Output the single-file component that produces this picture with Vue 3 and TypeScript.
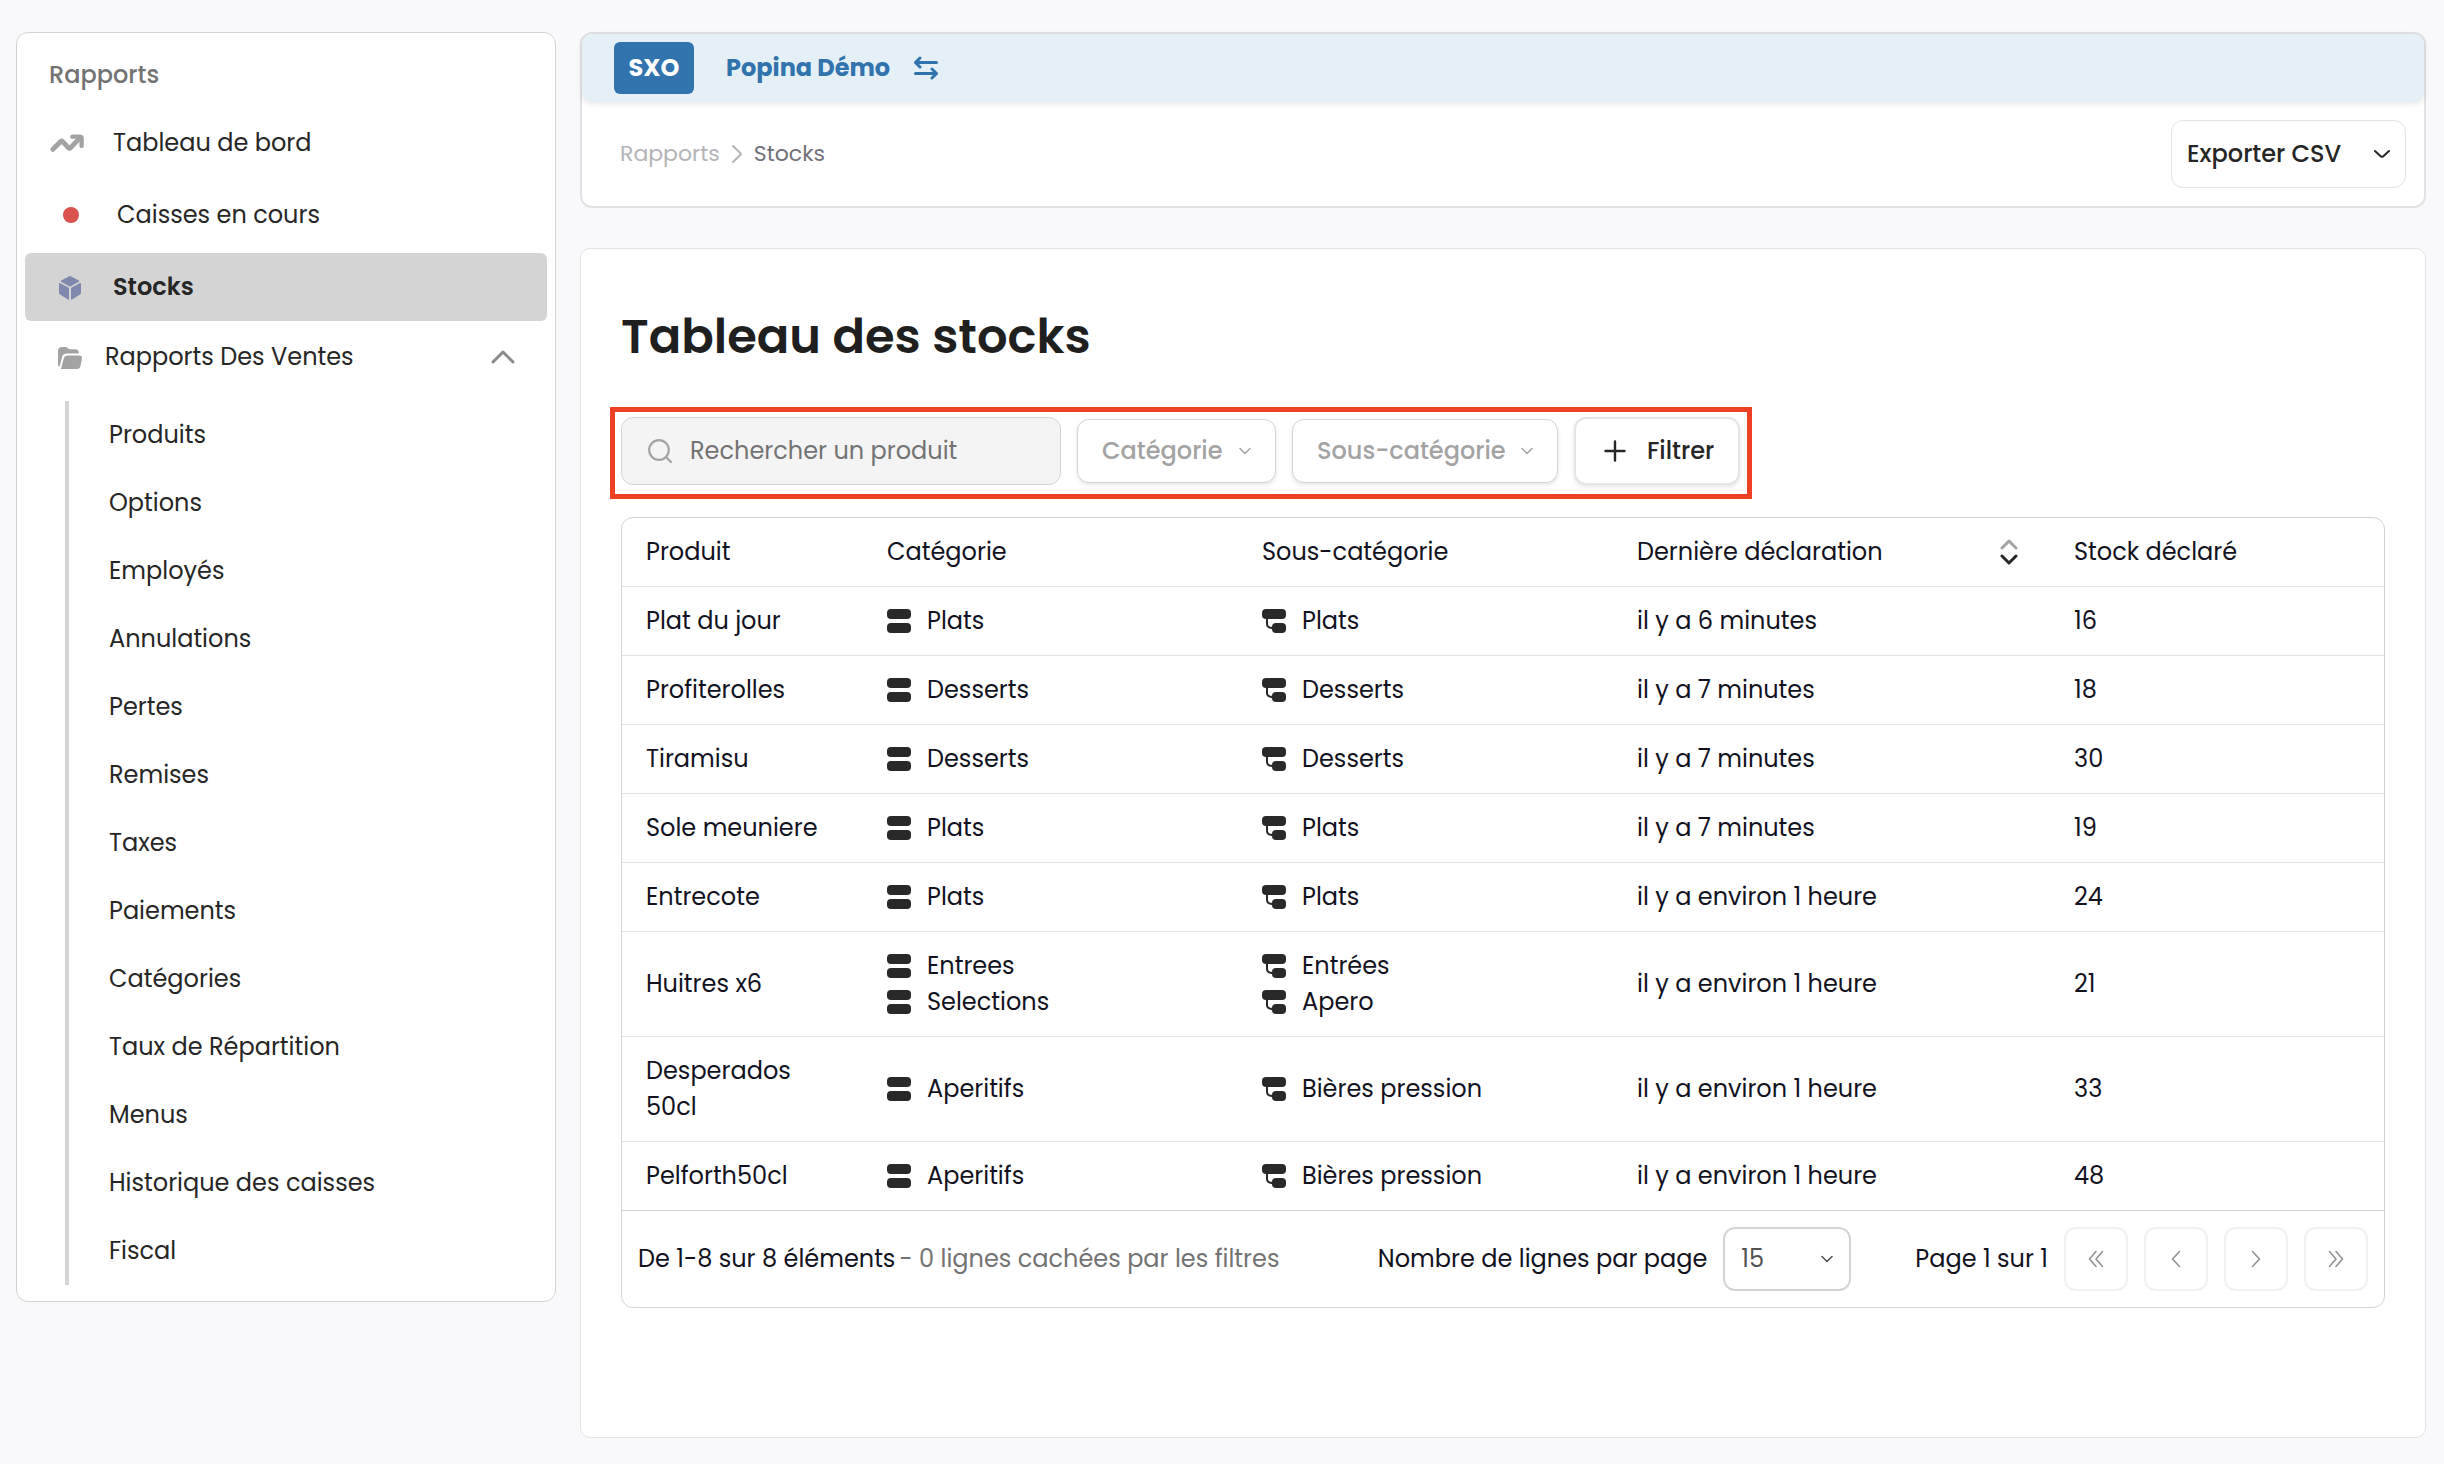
<script setup lang="ts">
import { ref } from 'vue'

interface StockRow {
  product: string
  categories: string[]
  subcategories: string[]
  declared: string
  stock: number
}

const reports: string[] = [
  'Produits', 'Options', 'Employés', 'Annulations', 'Pertes', 'Remises', 'Taxes',
  'Paiements', 'Catégories', 'Taux de Répartition', 'Menus', 'Historique des caisses', 'Fiscal',
]

const rows: StockRow[] = [
  { product: 'Plat du jour', categories: ['Plats'], subcategories: ['Plats'], declared: 'il y a 6 minutes', stock: 16 },
  { product: 'Profiterolles', categories: ['Desserts'], subcategories: ['Desserts'], declared: 'il y a 7 minutes', stock: 18 },
  { product: 'Tiramisu', categories: ['Desserts'], subcategories: ['Desserts'], declared: 'il y a 7 minutes', stock: 30 },
  { product: 'Sole meuniere', categories: ['Plats'], subcategories: ['Plats'], declared: 'il y a 7 minutes', stock: 19 },
  { product: 'Entrecote', categories: ['Plats'], subcategories: ['Plats'], declared: 'il y a environ 1 heure', stock: 24 },
  { product: 'Huitres x6', categories: ['Entrees', 'Selections'], subcategories: ['Entrées', 'Apero'], declared: 'il y a environ 1 heure', stock: 21 },
  { product: 'Desperados\n50cl', categories: ['Aperitifs'], subcategories: ['Bières pression'], declared: 'il y a environ 1 heure', stock: 33 },
  { product: 'Pelforth50cl', categories: ['Aperitifs'], subcategories: ['Bières pression'], declared: 'il y a environ 1 heure', stock: 48 },
]

const search = ref('')
const pageSize = ref('15')
</script>

<template>
  <div class="page">
    <nav class="sidebar" aria-label="Rapports">
      <h2 class="side-title">Rapports</h2>
      <a class="side-link" href="#">
        <svg class="icon-trend" viewBox="0 0 36 20" fill="none" stroke="#a3a3a3" stroke-width="5" stroke-linecap="round" stroke-linejoin="round">
          <path d="M3 16.500L11 8.500Q12 7.500 13 8.500L19 15Q20 16 21 15L31 4.500" />
          <path d="M23 3.500H30.500Q32.500 3.500 32.500 5.500V13" stroke-width="4.500" />
        </svg>
        <span>Tableau de bord</span>
      </a>
      <a class="side-link live" href="#">
        <span class="dot"></span>
        <span>Caisses en cours</span>
      </a>
      <a class="side-link active" href="#">
        <svg class="icon-box" viewBox="0 0 22 24" fill="#8188ad">
          <path d="M9.800.4Q11 -.2 12.200.4L19.800 4.600Q20.500 5.200 19.800 5.800L11.800 10.200Q11 10.600 10.200 10.200L2.200 5.800Q1.500 5.200 2.200 4.600Z" />
          <path d="M.9 7Q0 6.800 0 7.800V16.500Q0 17.800 1 18.500L9 23.500Q10 24 10 23V13Q10 12 9.200 11.600Z" />
          <path d="M21.100 7Q22 6.800 22 7.800V16.500Q22 17.800 21 18.500L13 23.500Q12 24 12 23V13Q12 12 12.800 11.600Z" />
        </svg>
        <span>Stocks</span>
      </a>
      <button class="side-group" type="button" aria-expanded="true">
        <svg class="icon-folder" viewBox="0 0 24 22" fill="#a3a3a3">
          <path d="M0 17.500V4Q0 0 4 0H7.500Q8.500 0 9.500.8L10.800 1.900Q11.300 2.300 12 2.300H17Q20.800 2.300 21 6.500H9.500Q5 6.500 4.200 9.500L1.600 19.800Q0 19 0 17.500Z" />
          <path d="M5.800 11.500Q6.500 8.400 9.500 8.400H21Q24.500 8.400 23.900 11.800L22.600 18.500Q22 22 18.500 22H2.800Z" />
        </svg>
        <span>Rapports Des Ventes</span>
        <svg class="icon-up" viewBox="0 0 24 14" fill="none" stroke="#8a8a8a" stroke-width="3" stroke-linecap="round" stroke-linejoin="round"><path d="M2 12L12 2L22 12" /></svg>
      </button>
      <ul class="sublist">
        <li v-for="item in reports" :key="item"><a href="#">{{ item }}</a></li>
      </ul>
    </nav>

    <main class="main">
      <header class="topbar">
        <div class="account">
          <span class="badge">SXO</span>
          <button class="shop" type="button">
            <span>Popina Démo</span>
            <svg class="icon-swap" viewBox="0 0 24 24" fill="none" stroke="#3173ad" stroke-width="3" stroke-linecap="round" stroke-linejoin="round">
              <path d="M6 2L1.500 6.500L6 11M1.500 6.500H22.500M18 13L22.500 17.500L18 22M22.500 17.500H1.500" />
            </svg>
          </button>
        </div>
        <div class="toolbar">
          <nav class="crumbs" aria-label="Fil d'Ariane">
            <a href="#">Rapports</a>
            <svg class="icon-crumb" viewBox="0 0 10 20" fill="none" stroke="#b4b4b8" stroke-width="2" stroke-linecap="round" stroke-linejoin="round"><path d="M1 2L8.500 9.200Q9.200 10 8.500 10.800L1 18" /></svg>
            <span class="current">Stocks</span>
          </nav>
          <button class="export" type="button">
            <span>Exporter CSV</span>
            <svg class="icon-down" viewBox="0 0 16 10" fill="none" stroke="#262626" stroke-width="2" stroke-linecap="round" stroke-linejoin="round"><path d="M1 2L7 7.500Q8 8.200 9 7.500L15 2" /></svg>
          </button>
        </div>
      </header>

      <section class="card">
        <h1>Tableau des stocks</h1>
        <div class="filters">
          <label class="search">
            <svg class="icon-search" viewBox="0 0 24 24" fill="none" stroke="#a3a3a3" stroke-width="2.200" stroke-linecap="round"><circle cx="11" cy="11" r="9.800" /><path d="M18.200 18.200L23 23" /></svg>
            <input v-model="search" type="text" placeholder="Rechercher un produit" aria-label="Rechercher un produit" />
          </label>
          <button class="facet category" type="button">
            <span>Catégorie</span>
            <svg class="icon-small" viewBox="0 0 12 8" fill="none" stroke="#a3a3a3" stroke-width="1.500" stroke-linecap="round" stroke-linejoin="round"><path d="M1 1.500L6 6.500L11 1.500" /></svg>
          </button>
          <button class="facet subcategory" type="button">
            <span>Sous-catégorie</span>
            <svg class="icon-small" viewBox="0 0 12 8" fill="none" stroke="#a3a3a3" stroke-width="1.500" stroke-linecap="round" stroke-linejoin="round"><path d="M1 1.500L6 6.500L11 1.500" /></svg>
          </button>
          <button class="apply" type="button">
            <svg class="icon-plus" viewBox="0 0 22 22" fill="none" stroke="#262626" stroke-width="2.400" stroke-linecap="round"><path d="M11 1.500V20.500M1.500 11H20.500" /></svg>
            <span>Filtrer</span>
          </button>
        </div>

        <div class="table-box">
          <table>
            <colgroup>
              <col class="c-product" /><col class="c-cat" /><col class="c-cat" /><col class="c-date" /><col />
            </colgroup>
            <thead>
              <tr>
                <th scope="col">Produit</th>
                <th scope="col">Catégorie</th>
                <th scope="col">Sous-catégorie</th>
                <th scope="col" aria-sort="descending">
                  <button class="sort" type="button">
                    <span>Dernière déclaration</span>
                    <svg class="icon-sort" viewBox="0 0 18 26" fill="none" stroke-width="3" stroke-linecap="round" stroke-linejoin="round">
                      <path d="M2 9L9 2L16 9" stroke="#a3a3a3" />
                      <path d="M2 17L9 24L16 17" stroke="#262626" />
                    </svg>
                  </button>
                </th>
                <th scope="col">Stock déclaré</th>
              </tr>
            </thead>
            <tbody>
              <tr v-for="row in rows" :key="row.product">
                <td class="product">{{ row.product }}</td>
                <td>
                  <div v-for="name in row.categories" :key="name" class="tag">
                    <svg class="icon-tag" viewBox="0 0 24 24" fill="#292929"><rect width="24" height="10" rx="4" /><rect y="14" width="24" height="10" rx="4" /></svg>
                    <span>{{ name }}</span>
                  </div>
                </td>
                <td>
                  <div v-for="name in row.subcategories" :key="name" class="tag">
                    <svg class="icon-tag" viewBox="0 0 24 24" fill="#292929">
                      <rect width="24" height="10" rx="4" />
                      <rect x="10" y="14" width="14" height="10" rx="4" />
                      <path d="M5 9V15Q5 19 11 19" fill="none" stroke="#292929" stroke-width="2" />
                    </svg>
                    <span>{{ name }}</span>
                  </div>
                </td>
                <td>{{ row.declared }}</td>
                <td>{{ row.stock }}</td>
              </tr>
            </tbody>
          </table>
          <footer class="pager">
            <p class="summary"><span>De 1-8 sur 8 éléments</span><span class="hidden-rows">- 0 lignes cachées par les filtres</span></p>
            <div class="pager-right">
              <label for="page-size">Nombre de lignes par page</label>
              <div class="select-wrap">
                <select id="page-size" v-model="pageSize">
                  <option>15</option>
                  <option>30</option>
                  <option>50</option>
                </select>
                <svg class="icon-small select-arrow" viewBox="0 0 12 8" fill="none" stroke="#525252" stroke-width="1.600" stroke-linecap="round" stroke-linejoin="round"><path d="M1 1.500L6 6.500L11 1.500" /></svg>
              </div>
              <span class="page-count">Page 1 sur 1</span>
              <div class="steps">
                <button type="button" disabled aria-label="Première page">
                  <svg class="icon-step" viewBox="0 0 16 18"><path d="M8 1.500L1.500 9L8 16.500M14.500 1.500L8 9L14.500 16.500" /></svg>
                </button>
                <button type="button" disabled aria-label="Page précédente">
                  <svg class="icon-step" viewBox="0 0 16 18"><path d="M11.500 1.500L4.500 9L11.500 16.500" /></svg>
                </button>
                <button type="button" disabled aria-label="Page suivante">
                  <svg class="icon-step" viewBox="0 0 16 18"><path d="M4.500 1.500L11.500 9L4.500 16.500" /></svg>
                </button>
                <button type="button" disabled aria-label="Dernière page">
                  <svg class="icon-step" viewBox="0 0 16 18"><path d="M8 1.500L14.500 9L8 16.500M1.500 1.500L8 9L1.500 16.500" /></svg>
                </button>
              </div>
            </div>
          </footer>
        </div>
      </section>
    </main>
  </div>
</template>

<style>
body {
  margin: 0;
  background: #f9f9fb;
}
</style>

<style scoped>
.page,
.page * {
  box-sizing: border-box;
}
.page {
  display: flex;
  align-items: flex-start;
  gap: 24px;
  min-height: 100vh;
  padding: 32px 18px 26px 16px;
  background: #f9f9fb;
  color: #262626;
  font-family: Poppins, Inter, "Open Sans", sans-serif;
  font-size: 24px;
  line-height: 36px;
}
svg {
  display: block;
  flex: none;
}
a {
  color: inherit;
  text-decoration: none;
}
button,
input,
select {
  font: inherit;
  color: inherit;
  margin: 0;
}
button {
  border: 0;
  padding: 0;
  background: none;
  text-align: left;
  white-space: nowrap;
}

/* Sidebar */
.sidebar {
  flex: 0 0 540px;
  padding: 0 8px 16px;
  background: #fff;
  border: 1px solid #d4d4d4;
  border-radius: 12px;
}
.side-title {
  margin: 24px 0 16px 24px;
  color: #737373;
  font-size: 24px;
  font-weight: 500;
  line-height: 36px;
}
.side-link,
.side-group {
  display: flex;
  align-items: center;
  width: 100%;
  height: 68px;
  margin-bottom: 4px;
  padding: 0 32px 0 25px;
  border-radius: 6px;
}
.side-link span:last-child {
  font-weight: 400;
}
.icon-trend {
  width: 35px;
  height: 20px;
  margin-right: 28px;
}
.dot {
  width: 16px;
  height: 16px;
  margin: 0 38px 0 13px;
  border-radius: 50%;
  background: #dc524e;
}
.side-link.active {
  margin-bottom: 2px;
  background: #d4d4d4;
}
.side-link.active span:last-child {
  font-weight: 600;
}
.icon-box {
  width: 22px;
  height: 24px;
  margin: 2px 32px 0 9px;
}
.side-group {
  margin-bottom: 10px;
}
.icon-folder {
  width: 24px;
  height: 22px;
  margin: 2px 23px 0 8px;
}
.icon-up {
  width: 24px;
  height: 14px;
  margin-left: auto;
}
.sublist {
  margin: 0 0 0 40px;
  padding: 0;
  border-left: 4px solid #d4d4d4;
  list-style: none;
}
.sublist a {
  display: block;
  padding: 16px 40px;
}

/* Top bar */
.main {
  display: flex;
  flex: 1;
  flex-direction: column;
  align-self: stretch;
  gap: 40px;
  min-width: 0;
}
.topbar {
  background: #fff;
  border: 2px solid #e2e2e4;
  border-radius: 12px;
}
.account {
  display: flex;
  align-items: center;
  gap: 32px;
  height: 68px;
  padding: 0 32px;
  border-radius: 10px;
  background: #e5f0f6;
  box-shadow: 0 2px 6px rgba(0, 0, 0, 0.1);
}
.badge {
  width: 80px;
  padding: 8px 0;
  border-radius: 6px;
  background: #3173ad;
  color: #fff;
  font-weight: 700;
  text-align: center;
}
.shop {
  display: flex;
  align-items: center;
  gap: 24px;
  color: #3173ad;
  font-weight: 700;
}
.icon-swap {
  width: 24px;
  height: 24px;
}
.toolbar {
  display: flex;
  align-items: center;
  justify-content: space-between;
  padding: 18px 18px 18px 38px;
}
.crumbs {
  display: flex;
  align-items: center;
  gap: 12px;
  color: #b4b4b8;
  font-size: 22px;
}
.current {
  color: #71717a;
}
.icon-crumb {
  width: 10px;
  height: 20px;
}
.export {
  display: flex;
  align-items: center;
  justify-content: space-between;
  width: 235px;
  height: 68px;
  padding: 0 15px;
  border: 1px solid #e2e2e4;
  border-radius: 12px;
  font-weight: 500;
}
.icon-down {
  width: 16px;
  height: 10px;
}

/* Card */
.card {
  flex: 1;
  padding: 52px 40px 40px;
  background: #fff;
  border: 1px solid #e2e2e4;
  border-radius: 10px;
}
h1 {
  margin: 0 0 34px;
  color: #1f1f1f;
  font-size: 48px;
  font-weight: 600;
  line-height: 72px;
}
.filters {
  display: flex;
  align-items: center;
  gap: 16px;
  width: fit-content;
  margin: 0 0 18px -11px;
  padding: 5px 7px 9px 6px;
  border: 5px solid #ed4024;
}
.search {
  display: flex;
  align-items: center;
  gap: 18px;
  width: 440px;
  height: 68px;
  padding: 0 26px;
  border: 1px solid #d4d4d4;
  border-radius: 12px;
  background: #f4f4f4;
}
.search input {
  flex: 1;
  min-width: 0;
  padding: 0;
  border: 0;
  outline: 0;
  background: none;
}
.search input::placeholder {
  color: #737373;
  opacity: 1;
}
.icon-search {
  width: 24px;
  height: 24px;
}
.facet {
  display: flex;
  align-items: center;
  justify-content: space-between;
  height: 64px;
  padding: 0 24px;
  border: 1px solid #d4d4d4;
  border-radius: 12px;
  background: #fff;
  box-shadow: 0 2px 4px rgba(0, 0, 0, 0.1);
  color: #a3a3a3;
  font-weight: 500;
}
.category {
  width: 199px;
}
.subcategory {
  width: 266px;
}
.icon-small {
  width: 12px;
  height: 8px;
}
.apply {
  display: flex;
  align-items: center;
  gap: 21px;
  width: 166px;
  height: 68px;
  padding-left: 28px;
  border: 2px solid #e5e5e5;
  border-radius: 12px;
  background: #fff;
  box-shadow: 0 2px 4px rgba(0, 0, 0, 0.1);
  font-weight: 500;
}
.icon-plus {
  width: 22px;
  height: 22px;
}

/* Table */
.table-box {
  border: 1px solid #d4d4d4;
  border-radius: 12px;
  color: #12121f;
}
table {
  width: 100%;
  border-collapse: separate;
  border-spacing: 0;
  table-layout: fixed;
}
.c-product {
  width: 241px;
}
.c-cat {
  width: 375px;
}
.c-date {
  width: 437px;
}
th,
td {
  padding: 16px 24px;
  border-bottom: 1px solid #e2e2e4;
  font-weight: 400;
  text-align: left;
  vertical-align: middle;
}
tbody tr:last-child td {
  border-bottom-color: #d4d4d4;
}
.product {
  white-space: pre-line;
}
.sort {
  display: flex;
  align-items: center;
  justify-content: space-between;
  width: 100%;
  padding-right: 8px;
}
.icon-sort {
  width: 18px;
  height: 26px;
}
.tag {
  display: flex;
  align-items: center;
  gap: 16px;
}
.icon-tag {
  width: 24px;
  height: 24px;
}

/* Pager */
.pager {
  display: flex;
  align-items: center;
  justify-content: space-between;
  padding: 16px;
}
.summary {
  display: flex;
  gap: 4px;
  margin: 0;
}
.hidden-rows {
  color: #737373;
}
.pager-right {
  display: flex;
  align-items: center;
  gap: 16px;
}
.select-wrap {
  position: relative;
}
select {
  display: block;
  width: 128px;
  height: 64px;
  padding: 0 16px;
  border: 2px solid #d4d4d4;
  border-radius: 12px;
  background: #fff;
  color: #525252;
  appearance: none;
}
.select-arrow {
  position: absolute;
  top: 28px;
  right: 18px;
  pointer-events: none;
}
.page-count {
  margin-left: 48px;
}
.steps {
  display: flex;
  gap: 16px;
}
.steps button {
  display: flex;
  align-items: center;
  justify-content: center;
  width: 64px;
  height: 64px;
  border: 2px solid #f0f0f5;
  border-radius: 12px;
}
.icon-step {
  width: 16px;
  height: 18px;
  fill: none;
  stroke: #929292;
  stroke-width: 1.6;
  stroke-linecap: round;
  stroke-linejoin: round;
}
</style>
